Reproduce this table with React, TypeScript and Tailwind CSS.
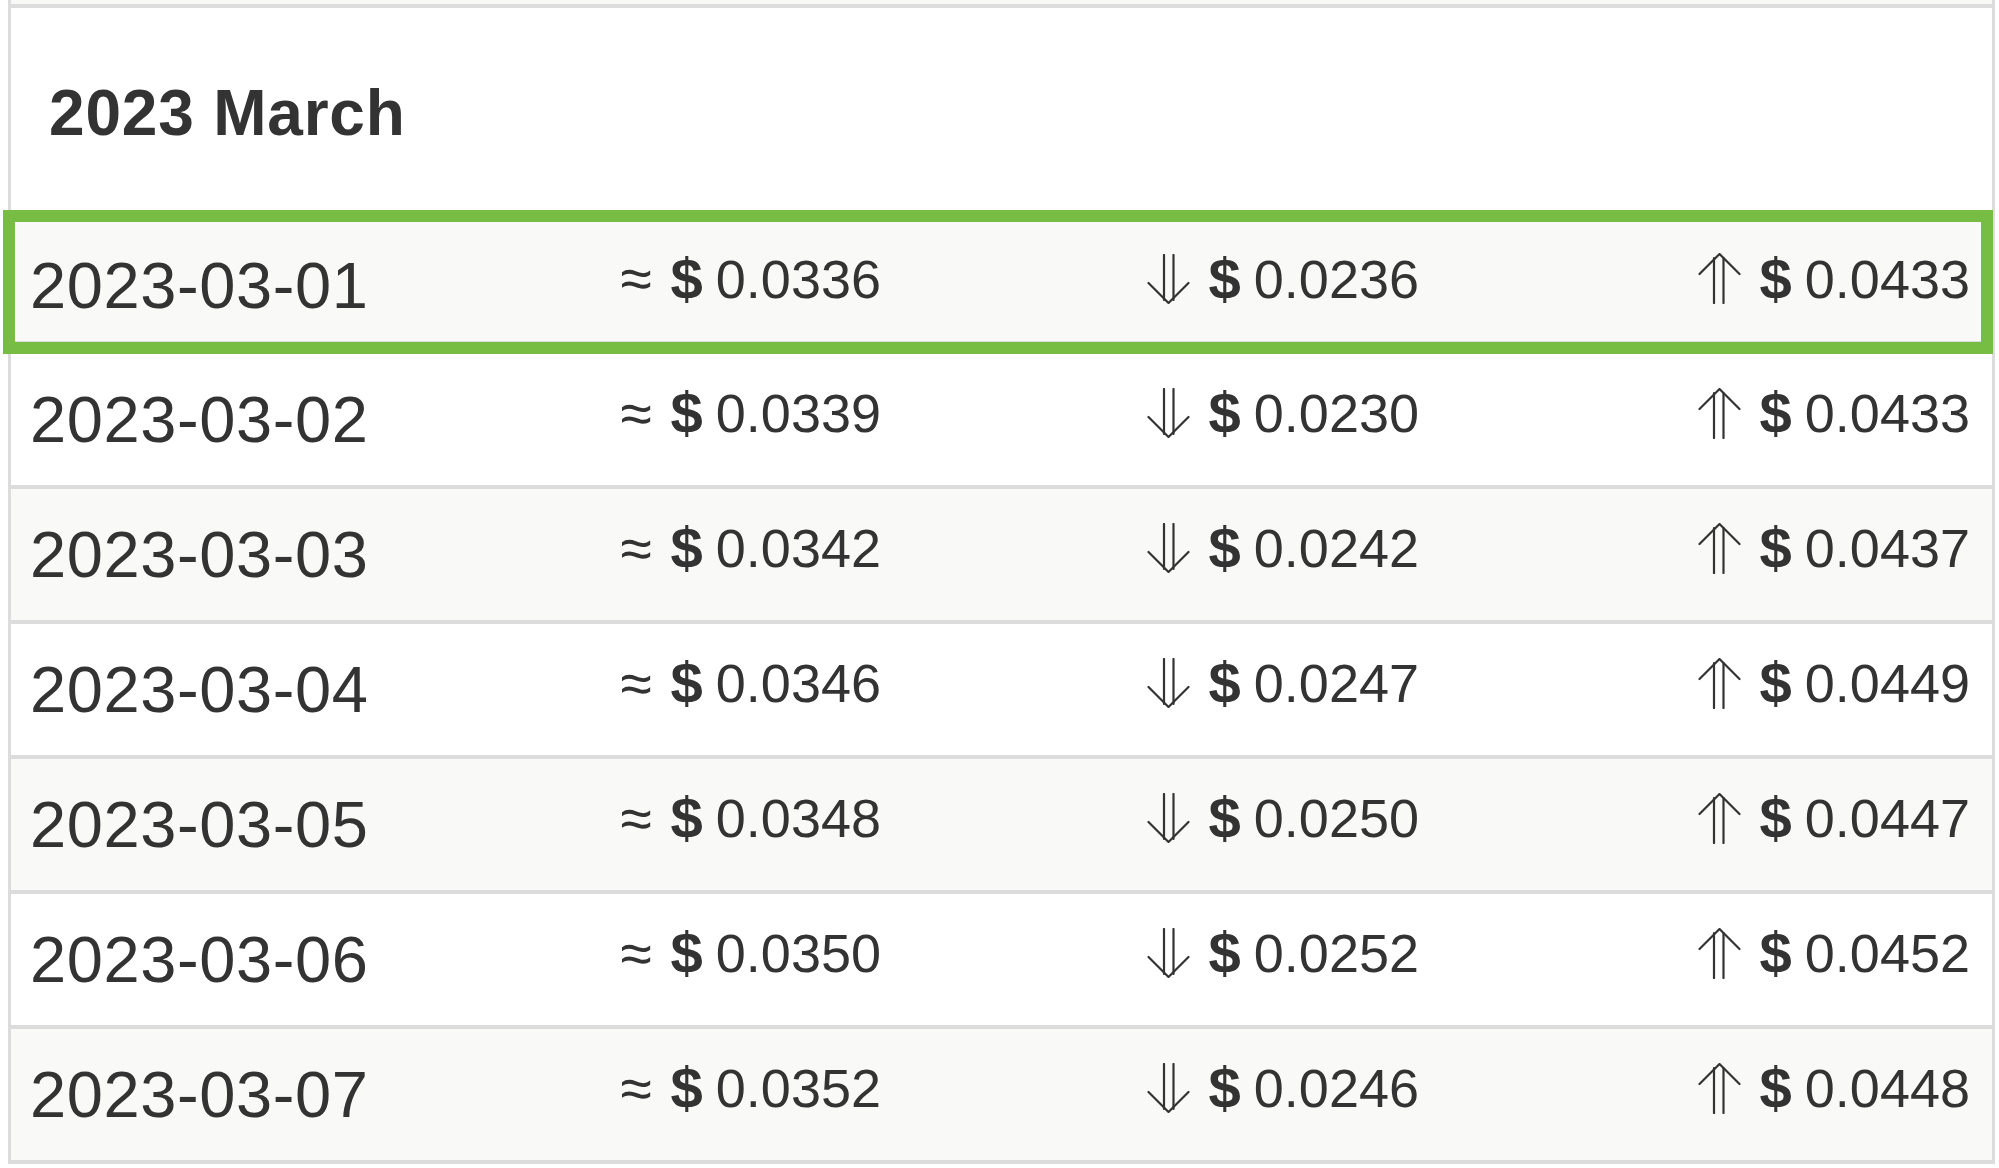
import React from "react";

type Row = { date: string; avg: string; low: string; high: string };

const rows: Row[] = [
  { date: "2023-03-01", avg: "0.0336", low: "0.0236", high: "0.0433" },
  { date: "2023-03-02", avg: "0.0339", low: "0.0230", high: "0.0433" },
  { date: "2023-03-03", avg: "0.0342", low: "0.0242", high: "0.0437" },
  { date: "2023-03-04", avg: "0.0346", low: "0.0247", high: "0.0449" },
  { date: "2023-03-05", avg: "0.0348", low: "0.0250", high: "0.0447" },
  { date: "2023-03-06", avg: "0.0350", low: "0.0252", high: "0.0452" },
  { date: "2023-03-07", avg: "0.0352", low: "0.0246", high: "0.0448" },
];

function DownArrows() {
  return (
    <svg width="43" height="50" viewBox="0 0 43 50" fill="none" stroke="#333" strokeWidth="2.2" strokeLinecap="round" strokeLinejoin="round">
      <path d="M17 1 V46" />
      <path d="M26.5 1 V46" />
      <path d="M1.5 29 L21.5 49 L41.5 29" />
    </svg>
  );
}

function UpArrows() {
  return (
    <svg width="43" height="51" viewBox="0 0 43 51" fill="none" stroke="#333" strokeWidth="2.2" strokeLinecap="round" strokeLinejoin="round">
      <path d="M16 5 V50" />
      <path d="M25.5 5 V50" />
      <path d="M1.5 21 L21.5 1 L41.5 21" />
    </svg>
  );
}

function Value({ icon, value }: { icon: React.ReactNode; value: string }) {
  return (
    <div className="flex items-center justify-end pb-[13px] leading-none whitespace-nowrap">
      {icon}
      <span className="ml-[19px] text-[58px] font-bold leading-none">$</span>
      <span className="ml-[13px] text-[54px] leading-none">{value}</span>
    </div>
  );
}

function Cells({ r }: { r: Row }) {
  return (
    <>
      <div className="text-[65px] leading-none tracking-[0.6px] whitespace-nowrap">{r.date}</div>
      <Value icon={<span className="text-[57px] leading-none">≈</span>} value={r.avg} />
      <Value icon={<DownArrows />} value={r.low} />
      <Value icon={<UpArrows />} value={r.high} />
    </>
  );
}

export default function App() {
  return (
    <div className="w-[1999px] h-[1168px] overflow-hidden bg-white text-[#333] font-['Liberation_Sans',Arial,sans-serif]">
      <div className="ml-[8px] w-[1987px] border-x-[3px] border-[#dcdcdc]">
        <div className="h-[4px] bg-[#f8f8f7]" />
        <div className="h-[4px] bg-[#dcdcdc]" />
        <div className="h-[202px] pt-[73px] pl-[38px]">
          <h2 className="text-[64px] font-bold leading-none tracking-[0.8px]">2023 March</h2>
        </div>
        {rows.map((r, i) =>
          i === 0 ? (
            <div key={r.date} className="-ml-[8px] -mr-[1px] border-[12px] border-[#78bd43]">
              <div className="grid h-[120px] grid-cols-[1fr_279px_538px_551px] items-center border-b border-[#dcdcdc] bg-[#f9f9f7] pl-[15px] pr-[11px] pt-[7px]">
                <Cells r={r} />
              </div>
            </div>
          ) : (
            <div
              key={r.date}
              className={`grid h-[135px] grid-cols-[1fr_279px_538px_551px] items-center border-b-[4px] border-[#dcdcdc] pl-[19px] pr-[22px] ${
                i % 2 === 0 ? "bg-[#f9f9f7]" : "bg-white"
              }`}
            >
              <Cells r={r} />
            </div>
          )
        )}
      </div>
    </div>
  );
}
